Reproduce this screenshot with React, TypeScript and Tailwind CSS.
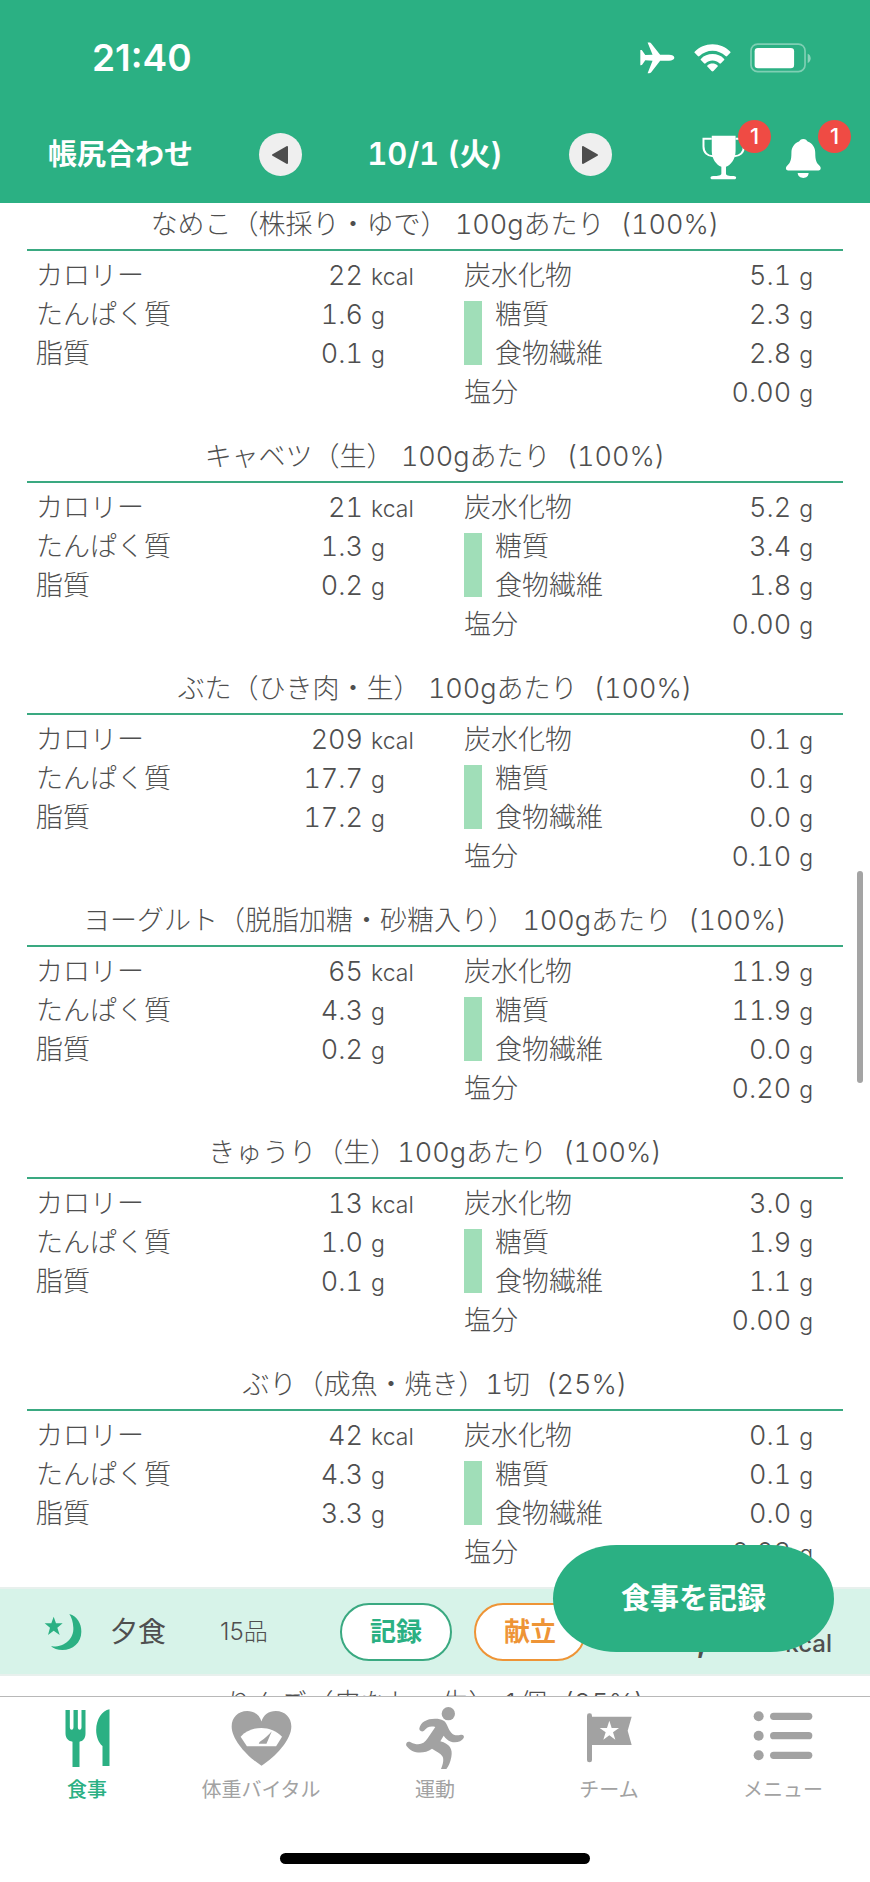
import type { ReactNode } from 'react';

type Food = {
  name: string;
  ratio: string;
  kcal: string;
  protein: string;
  fat: string;
  carbs: string;
  sugar: string;
  fiber: string;
  salt: string;
};

const foods: Food[] = [
  { name: 'なめこ（株採り・ゆで） 100gあたり', ratio: '(100%)', kcal: '22', protein: '1.6', fat: '0.1', carbs: '5.1', sugar: '2.3', fiber: '2.8', salt: '0.00' },
  { name: 'キャベツ（生） 100gあたり', ratio: '(100%)', kcal: '21', protein: '1.3', fat: '0.2', carbs: '5.2', sugar: '3.4', fiber: '1.8', salt: '0.00' },
  { name: 'ぶた（ひき肉・生） 100gあたり', ratio: '(100%)', kcal: '209', protein: '17.7', fat: '17.2', carbs: '0.1', sugar: '0.1', fiber: '0.0', salt: '0.10' },
  { name: 'ヨーグルト（脱脂加糖・砂糖入り） 100gあたり', ratio: '(100%)', kcal: '65', protein: '4.3', fat: '0.2', carbs: '11.9', sugar: '11.9', fiber: '0.0', salt: '0.20' },
  { name: 'きゅうり（生）100gあたり', ratio: '(100%)', kcal: '13', protein: '1.0', fat: '0.1', carbs: '3.0', sugar: '1.9', fiber: '1.1', salt: '0.00' },
  { name: 'ぶり（成魚・焼き）1切', ratio: '(25%)', kcal: '42', protein: '4.3', fat: '3.3', carbs: '0.1', sugar: '0.1', fiber: '0.0', salt: '0.03' },
];

function StatusBar() {
  return (
    <div className="flex h-[104px] items-center justify-between pt-3 pr-[59px] pl-[92px]">
      <span className="text-[37px] font-semibold">21:40</span>
      <div className="flex items-center">
        <svg viewBox="614 128 106 96" className="h-8 w-[35px]" fill="currentColor" aria-hidden="true">
          <path d="M718 175c0 5-7 9-16 9h-27l-27 35c-2 3-5 3-8 3h-3l15-38-22-1-9 13c-1 2-3 2-6 2v-46c3 0 5 0 6 2l9 13 22-1-15-37h3c3 0 6 0 8 3l27 34h27c9 0 16 4 16 9z" />
        </svg>
        <svg viewBox="777 130 112 86" className="ml-[19px] h-7 w-[37px]" fill="currentColor" aria-hidden="true">
          <path d="M833 131c22 0 41 9 54 22 2 2 2 3 0 5l-9 9c-2 2-3 2-5 0-11-10-25-16-40-16s-29 6-40 16c-2 2-3 2-5 0l-9-9c-2-2-2-3 0-5 13-13 32-22 54-22z" />
          <path d="M833 161c14 0 26 5 35 14 2 2 2 3 0 5l-9 9c-2 2-3 2-5 0-6-5-13-8-21-8s-15 3-21 8c-2 2-3 2-5 0l-9-9c-2-2-2-3 0-5 9-9 21-14 35-14z" />
          <path d="M833 190c6 0 11 2 15 5 2 2 2 3 0 5l-12 13c-2 2-4 2-6 0l-12-13c-2-2-2-3 0-5 4-3 9-5 15-5z" />
        </svg>
        <svg viewBox="945 128 184 90" className="ml-[19px] h-[30px] w-[61px]" fill="none" aria-hidden="true">
          <rect x="948" y="131" width="163" height="83" rx="20" stroke="#fff" strokeOpacity="0.4" strokeWidth="5" />
          <rect x="959" y="143" width="119" height="61" rx="10" fill="#fff" />
          <path d="M1119 160c12 4 12 24 0 28z" fill="#fff" fillOpacity="0.45" />
        </svg>
      </div>
    </div>
  );
}

function DateButton({ label, children }: { label: string; children: ReactNode }) {
  return (
    <button aria-label={label} className="flex size-[43px] items-center justify-center rounded-full bg-[#efefef] text-[#4d4d4d]">
      <svg viewBox="0 0 16 18" className="h-[18px] w-4" fill="currentColor" stroke="currentColor" strokeWidth="2" strokeLinejoin="round">
        {children}
      </svg>
    </button>
  );
}

function Badge({ count }: { count: number }) {
  return (
    <span className="absolute -top-[15px] left-9 flex size-[33px] items-center justify-center rounded-full bg-[#ef4b44] text-[22px] font-medium">
      {count}
    </span>
  );
}

function Header() {
  return (
    <header className="shrink-0 bg-[#2bb083] text-white">
      <StatusBar />
      <div className="grid h-[99px] grid-cols-[1fr_353px_1fr] items-center pt-0.5">
        <button className="justify-self-start pl-12 text-[29px] font-semibold whitespace-nowrap">帳尻合わせ</button>
        <div className="flex items-center justify-between">
          <DateButton label="前の日">
            <path d="M1 9 15 1v16z" />
          </DateButton>
          <span className="text-[31px] font-semibold tabular-nums">10/1 (火)</span>
          <DateButton label="次の日">
            <path d="M15 9 1 1v16z" />
          </DateButton>
        </div>
        <div className="flex items-center justify-end gap-9 pt-1.5 pr-[46px]">
          <button aria-label="トロフィー" className="relative">
            <svg viewBox="799 404 132 136" className="h-[45px] w-11" fill="currentColor" aria-hidden="true">
              <path d="M828 406h72v46c0 24-14 42-29 48v20c0 6 8 8 23 8 10 0 10 10 2 10h-66c-8 0-8-10 2-10 15 0 25-2 25-8v-20c-15-6-29-24-29-48z" />
              <path d="M828 415h-25v24c0 18 12 29 29 29M900 415h25v24c0 18-12 29-29 29" fill="none" stroke="currentColor" strokeWidth="6" />
            </svg>
            <Badge count={1} />
          </button>
          <button aria-label="お知らせ" className="relative">
            <svg viewBox="1044 404 126 136" className="h-[45px] w-[42px]" fill="currentColor" aria-hidden="true">
              <path d="M1108 416c7 0 11 4 13 8 15 6 23 18 23 34 0 22 3 30 13 39 6 6 4 14-3 14h-92c-7 0-9-8-3-14 10-9 13-17 13-39 0-16 8-28 23-34 2-4 6-8 13-8z" />
              <path d="M1091 519h33c0 9-7 15-16 15s-17-6-17-15z" />
            </svg>
            <Badge count={1} />
          </button>
        </div>
      </div>
    </header>
  );
}

function Row({ label, value, unit, unitClass }: { label: string; value: string; unit: string; unitClass: string }) {
  return (
    <div className="flex h-[39px] items-baseline leading-[39px]">
      <dt className="flex-1">{label}</dt>
      <dd className="flex items-baseline tabular-nums">
        {value}
        <span className={`text-[23px] ${unitClass}`}>{unit}</span>
      </dd>
    </div>
  );
}

function FoodTitle({ name, ratio }: { name: string; ratio: string }) {
  return (
    <h2 className="border-b-2 border-[#3aa981] pb-[5px] text-center leading-[39px] whitespace-nowrap tabular-nums">
      {name}
      <span className="ml-4">{ratio}</span>
    </h2>
  );
}

function FoodSection({ food }: { food: Food }) {
  return (
    <section>
      <FoodTitle name={food.name} ratio={food.ratio} />
      <div className="grid grid-cols-[13fr_12fr] gap-[50px] pt-[5px] pr-[30px] pl-[9px]">
        <dl>
          <Row label="カロリー" value={food.kcal} unit="kcal" unitClass="ml-2 w-[43px]" />
          <Row label="たんぱく質" value={food.protein} unit="g" unitClass="ml-2 w-[43px]" />
          <Row label="脂質" value={food.fat} unit="g" unitClass="ml-2 w-[43px]" />
        </dl>
        <div>
          <dl>
            <Row label="炭水化物" value={food.carbs} unit="g" unitClass="ml-2" />
          </dl>
          <div className="flex gap-[13px]">
            <span className="mt-1.5 mb-2 w-[18px] bg-[#a0deb8]" />
            <dl className="flex-1">
              <Row label="糖質" value={food.sugar} unit="g" unitClass="ml-2" />
              <Row label="食物繊維" value={food.fiber} unit="g" unitClass="ml-2" />
            </dl>
          </div>
          <dl>
            <Row label="塩分" value={food.salt} unit="g" unitClass="ml-2" />
          </dl>
        </div>
      </div>
    </section>
  );
}

function DinnerBar() {
  return (
    <div className="mt-[15px] flex h-[89px] items-center border-y-2 border-[#e8f0ed] bg-[#d7f3e9] pr-[38px] pl-11">
      <svg viewBox="132 396 114 114" className="size-[38px] text-[#2bb083]" fill="currentColor" aria-hidden="true">
        <path d="M208 399c24 7 36 29 36 53 0 33-26 55-57 55-14 0-27-4-34-11 37 4 69-21 67-56-1-18-5-30-12-41z" />
        <path d="m161 407 7 20h20l-16 13 7 22-18-13-17 13 6-22-16-13h20z" />
      </svg>
      <h2 className="ml-7 text-[28px]">夕食</h2>
      <span className="ml-[54px] w-[72px] text-2xl font-light whitespace-nowrap">15品</span>
      <button className="ml-12 h-[58px] w-[112px] rounded-full border-2 border-[#3aa981] bg-white text-[26px] font-bold text-[#2bb083]">記録</button>
      <button className="ml-[22px] h-[58px] w-[112px] rounded-full border-2 border-[#ee9436] bg-white text-[26px] font-bold text-[#ee9436]">献立</button>
      <p className="flex-1 pt-4 text-right text-[34px] leading-[50px] font-semibold whitespace-nowrap">
        1,000
        <span className="ml-3 text-2xl font-medium">kcal</span>
      </p>
    </div>
  );
}

function Tab({ label, active = false, children }: { label: string; active?: boolean; children: ReactNode }) {
  return (
    <a
      href="#"
      aria-current={active ? 'page' : undefined}
      className={`flex flex-1 flex-col items-center ${active ? 'font-medium text-[#2bb083]' : 'text-[#a2a2a2]'}`}
    >
      <span className="flex h-[66px] items-center">{children}</span>
      <span className="mt-[5px] text-[20px] leading-7">{label}</span>
    </a>
  );
}

function TabBar() {
  return (
    <nav className="flex h-[186px] shrink-0 flex-col border-t border-[#b8b8b8] bg-white">
      <div className="flex pt-2">
        <Tab label="食事" active>
          <svg viewBox="191 687 134 174" className="h-[58px] w-[45px]" fill="currentColor" aria-hidden="true">
            <path d="M192 690h13v52c0 10 11 10 11 0v-52h13v52c0 10 11 10 11 0v-52h12v70c0 16-8 24-18 25v76h-21v-76c-11-1-21-9-21-25z" />
            <path d="M324 688v170h-21v-60c-12-10-19-28-19-48 0-32 18-58 40-62z" />
          </svg>
        </Tab>
        <Tab label="体重バイタル">
          <svg viewBox="690 688 184 170" className="h-[57px] w-[61px]" fill="currentColor" aria-hidden="true">
            <path d="M782 722c-5-20-22-32-43-32-28 0-47 20-47 47 0 40 48 92 90 118 42-26 90-78 90-118 0-27-19-47-47-47-21 0-38 12-43 32z" />
            <path d="M719 768c32-36 93-36 125 0l-18 28h-88z" fill="#fff" />
            <path d="m813 751-16 38h-23c0-3 2-6 5-8 14-9 24-19 34-30z" />
          </svg>
        </Tab>
        <Tab label="運動">
          <svg viewBox="7 51 180 192" className="h-16 w-[60px]" fill="currentColor" aria-hidden="true">
            <circle cx="137" cy="74" r="20" />
            <path d="M50 118c4-19 22-29 47-29 22 0 31 6 37 21 8 20 18 33 38 28 9-3 14 3 11 9-6 11-24 16-38 11-10-4-16-10-22-18l-10 17c28 8 38 23 33 47-3 17-8 27-15 36h-16c7-16 9-30 4-38-5-9-18-15-31-23-26 18-60 15-77-9-3-7 4-15 13-10 24 12 40 5 51-12l23-34c-16-4-25 1-34 11-6 5-15 1-14-7z" />
          </svg>
        </Tab>
        <Tab label="チーム">
          <svg viewBox="451 686 144 186" className="h-[62px] w-12" fill="currentColor" aria-hidden="true">
            <rect x="457" y="705" width="15" height="147" rx="7" />
            <path d="M465 715h126l-12 42 12 43H465z" />
            <path d="m524 727 7 22h22l-18 13 7 22-18-13-18 13 7-22-18-13h22z" fill="#fff" />
          </svg>
        </Tab>
        <Tab label="メニュー">
          <svg viewBox="954 680 180 192" className="h-16 w-[60px]" fill="currentColor" aria-hidden="true">
            <circle cx="971" cy="711" r="15" />
            <circle cx="971" cy="769" r="15" />
            <circle cx="971" cy="828" r="15" />
            <rect x="1005" y="700" width="127" height="22" rx="11" />
            <rect x="1005" y="758" width="127" height="22" rx="11" />
            <rect x="1005" y="817" width="127" height="22" rx="11" />
          </svg>
        </Tab>
      </div>
      <span className="mx-auto mt-auto mb-[18px] h-[11px] w-[310px] rounded-full bg-black" />
    </nav>
  );
}

export default function App() {
  return (
    <div className="flex h-screen flex-col overflow-hidden bg-white font-['Inter','Noto_Sans_CJK_JP',sans-serif] text-[#4f4f4f]">
      <Header />
      <main className="relative min-h-0 flex-1 overflow-hidden">
        <div className="flex flex-col gap-[25px] px-[27px] pt-0.5 text-[27px] font-light">
          {foods.map(food => (
            <FoodSection key={food.name} food={food} />
          ))}
        </div>
        <DinnerBar />
        <div className="px-[27px] pt-2 text-[27px] font-light">
          <FoodTitle name="りんご（皮なし・生） 1個" ratio="(25%)" />
        </div>
        <button className="absolute right-9 bottom-11 h-[107px] w-[281px] rounded-[64px/54px] bg-[#2bb083] text-[29px] font-bold text-white">
          食事を記録
        </button>
        <span className="absolute top-[668px] right-[7px] h-[212px] w-1.5 rounded-full bg-[#a4a4a4]" />
      </main>
      <TabBar />
    </div>
  );
}
